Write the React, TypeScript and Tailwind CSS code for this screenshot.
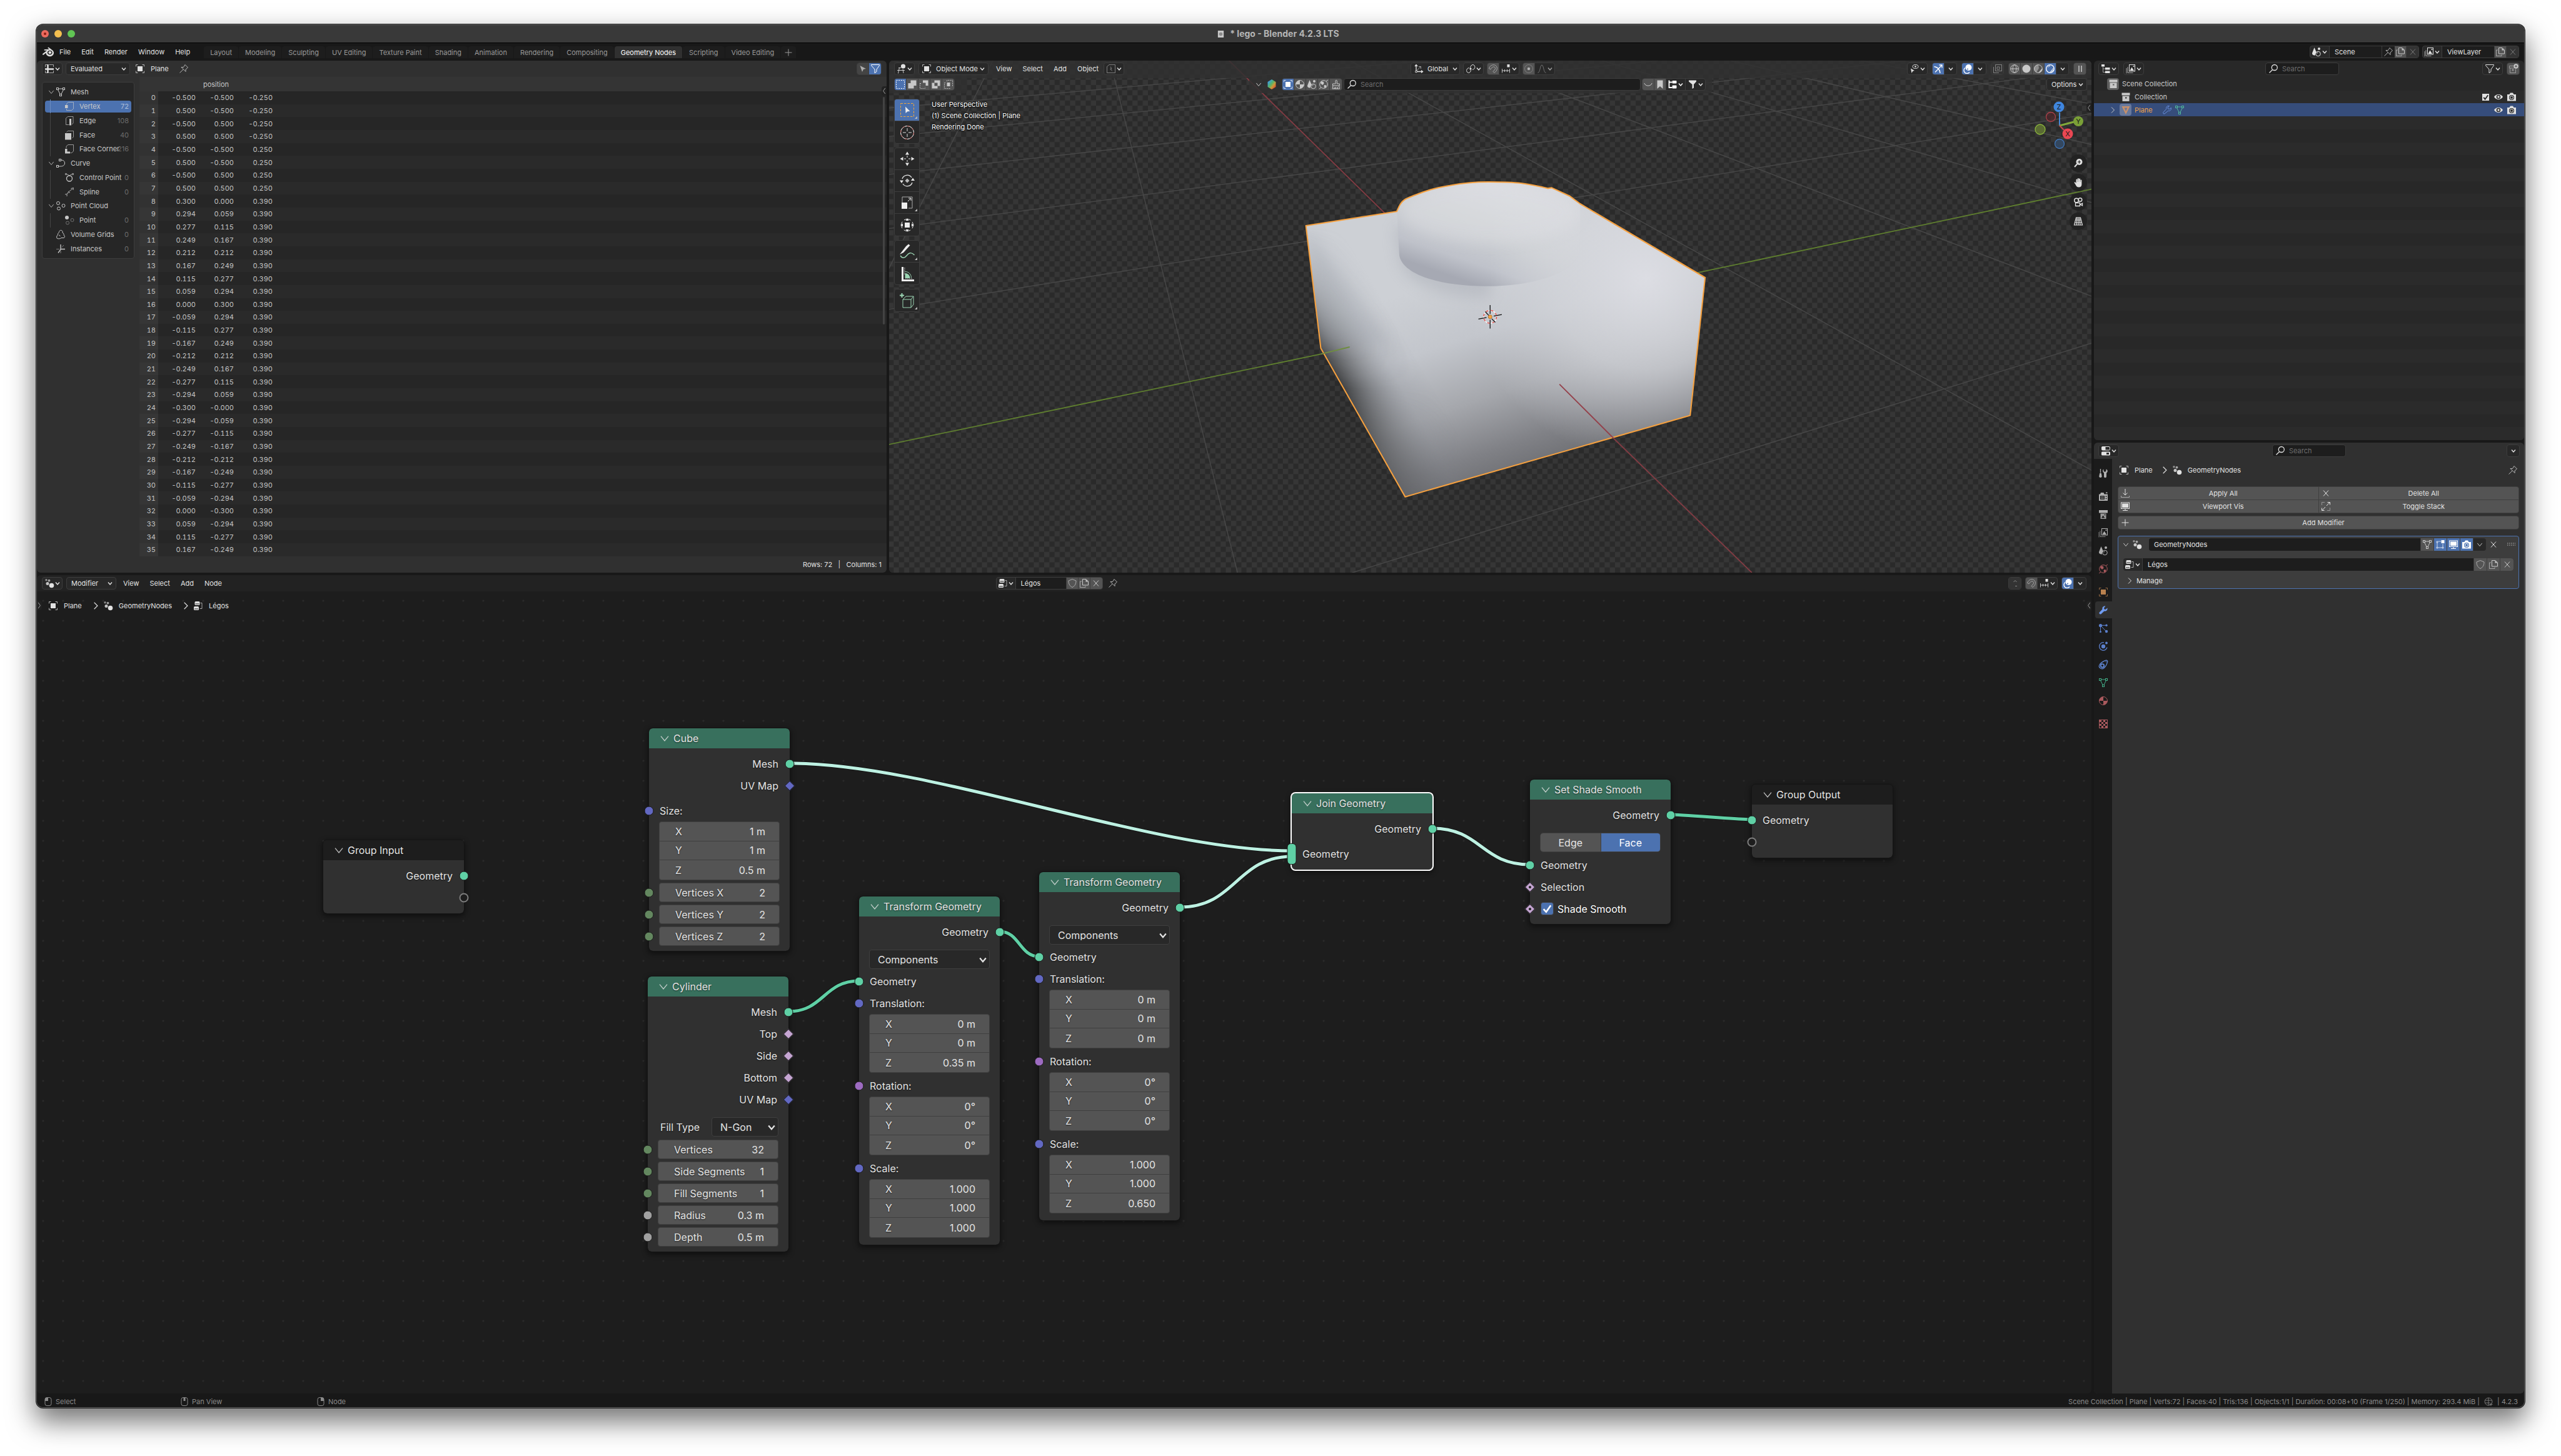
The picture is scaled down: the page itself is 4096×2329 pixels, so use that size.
import type { ReactNode } from "react";
import { SiBlender } from "react-icons/si";

/* ------------------------------------------------------------------ */
/* Icons, drawn on a 16 × 16 grid                                       */
/* ------------------------------------------------------------------ */

const solid = { fill: "currentColor", stroke: "none" } as const;

const ICONS: Record<string, ReactNode> = {
  object: (
    <>
      <path d="M4.5 1.5h-3v3M11.5 1.5h3v3M4.5 14.5h-3v-3M11.5 14.5h3v-3" opacity=".75" />
      <rect x="4" y="4" width="8" height="8" {...solid} />
    </>
  ),
  sheet: (
    <>
      <path d="M1.5 5V1.5H5M7.5 1.5H14.5V5M14.5 11V14.5H7.5M1.5 11V14.5H5" opacity=".7" />
      <path d="M5.5 1v14M1 8.500h14" strokeWidth="2.400" />
    </>
  ),
  pin: <path d="M10 1.500l4.500 4.500-3.500 3v3.500L4 5.500h3.500zM7.200 9L1.500 14.500" opacity=".75" strokeLinejoin="round" />,
  mesh: (
    <>
      <rect x="1.500" y="1.500" width="3" height="3" />
      <rect x="11.500" y="1.500" width="3" height="3" />
      <rect x="6.500" y="11.500" width="3" height="3" />
      <path d="M4.500 3h7M3.500 4.500l3.600 7M12.500 4.500l-3.600 7" />
    </>
  ),
  meshSolid: <path d="M1.500 2h13L8 15zM5.500 4.500L8 10l2.500-5.500z" {...solid} fillRule="evenodd" />,
  vertex: (
    <>
      <path d="M3.500 5.500V4l3-2.500h8V12l-3 2.500h-8V12" opacity=".7" />
      <rect x="1" y="6" width="4.500" height="5" {...solid} />
    </>
  ),
  edge: (
    <>
      <path d="M7.500 14.500h-5V4l3-2.500h8.500V12l-2 2" opacity=".7" />
      <rect x="8" y="5" width="3" height="10.500" {...solid} />
    </>
  ),
  face: (
    <>
      <path d="M3.500 3.500l2-2h9V11l-2 2" opacity=".7" />
      <rect x="1" y="5" width="10" height="10.500" {...solid} />
    </>
  ),
  corner: (
    <>
      <path d="M3 7V4l3-2.500h8.500V12l-3 2.500h-2" opacity=".7" />
      <path d="M1 8h3.500v4.500H9v3H1z" {...solid} />
    </>
  ),
  curve: (
    <>
      <rect x="5.500" y="1.500" width="3" height="3" />
      <rect x="1.500" y="11.500" width="3" height="3" />
      <path d="M8.500 3c4 0 6 2 6 5s-2.500 5-6 5h-4" />
    </>
  ),
  controlPoint: (
    <>
      <circle cx="8" cy="9.500" r="4.500" strokeWidth="1.300" />
      <path d="M1.500 1.500h2v2h-2zM12.500 1.500h2v2h-2zM4 3l2 .5L8 5l2-1.500 2-.5" opacity=".75" />
    </>
  ),
  spline: <path d="M1 12l4-1 1.500-3.500 2-1L13 3M10.500 2.500l4-1-.5 3.500M4 15v-3M6.500 8.500L9 9" opacity=".85" />,
  pointCloud: (
    <>
      <circle cx="4" cy="4" r="2.500" />
      <circle cx="12.500" cy="8" r="2.500" />
      <circle cx="5" cy="12.500" r="2.500" />
    </>
  ),
  point: (
    <>
      <circle cx="4" cy="4" r="3" {...solid} />
      <circle cx="12.500" cy="8" r="2.500" opacity=".45" />
      <circle cx="5" cy="12.500" r="2.500" opacity=".45" />
    </>
  ),
  volume: <path d="M2 14c-1-2 0-4.500 1.500-5C3 7 4 6 5 5.500 5.500 2.500 7 1.200 8.500 1.300c2 0 3 2 2.500 4 2 1 2.500 2.500 2 4 1.800.7 2 3 .5 4.200H9C8 15 3.500 15.500 2 14zM5 9c1.500 0 2 1 2 2" />,
  instances: (
    <>
      <path d="M8 1v8M8 9l-4 5.500M8 8.500h7" strokeWidth="1.300" />
      <path d="M1 8.500h5M8 11v4M10 5.500l3-3.500" opacity=".55" />
    </>
  ),
  cursor: <path d="M3.500 3l9.500 5-4 .8L7 13z" {...solid} opacity=".8" />,
  filter: <path d="M1.500 1.500h13v1.200L10 9v3.500L7 14.800V9L1.500 2.700z" />,
  filterSolid: <path d="M2 1.500h12v2L10 8v5.500L7.500 15V8L2 3.500z" {...solid} />,
  view3d: (
    <>
      <circle cx="10.500" cy="4" r="3.600" {...solid} />
      <path d="M1 10.500h12M3 6.500h4M4.500 6L2.500 15.500M10 8.500l1 6.500M.5 14" opacity=".85" />
    </>
  ),
  selectSet: <path d="M1.500 1.500h13v13h-13z" strokeDasharray="2 1.700" />,
  selectExtend: <path d="M5.500 1.500h9v8.500h-4v4.500h-9V6h4z" {...solid} />,
  selectSubtract: (
    <>
      <path d="M6 1.500h8.500V10h-4V5.500H6z" {...solid} />
      <path d="M1.500 6.500h3M1.500 6.500v8h8v-2.500" strokeDasharray="1.500 1.500" />
    </>
  ),
  selectDiff: <path d="M5.500 1.500h9v9h-4v4h-9v-9h4zM5.500 5.500v5h5v-5z" {...solid} fillRule="evenodd" />,
  selectAnd: (
    <>
      <rect x="5.500" y="5" width="5" height="6" {...solid} />
      <path d="M5.500 3V1.500h9v9H13M3 5.500H1.500v9h9V13" strokeDasharray="1.600 1.400" />
    </>
  ),
  script: (
    <>
      <path d="M5 1.500h9.500v13h-13V4.500z" opacity=".45" />
      <path d="M7 3.500L9.500 8 8 8.200l2.500 4L6 8.500l1.500-.3z" {...solid} opacity=".45" />
    </>
  ),
  axes: (
    <>
      <path d="M4 11V1.500M2 4l2-2.500L6 4M5.500 12.500h9M12 10.500l2.500 2L12 14.500" strokeWidth="1.300" />
      <circle cx="4" cy="12.500" r="1.500" />
      <path d="M5 11l6-6.500M8 4.500h3.500V8" opacity=".6" />
    </>
  ),
  pivot: (
    <>
      <path d="M7.500 6.500C8 3.500 9.500 1.500 12 1.500c4 1 4 7-1 8M8.500 9.500c0 3-1.500 5-4 5-4-1-4-7 1-8" />
      <circle cx="8" cy="8" r="1.600" {...solid} />
    </>
  ),
  magnet: <path d="M1.500 7.500C3 3 7 1 10.500 2c4 1.500 5 6 2.500 9.500L10 14.500l-2-2 3-3.500c1-1.500.5-3.500-1-4-2-.5-4 .5-6 4z" opacity=".7" />,
  snap: (
    <>
      <rect x="9.500" y="1" width="4" height="4.500" {...solid} />
      <path d="M1.500 8v6.500M5.500 9v4M9.500 9v4M13.500 8v6.500M1.500 11h12" opacity=".8" />
    </>
  ),
  prop: (
    <>
      <circle cx="8" cy="8" r="6.500" opacity=".35" />
      <circle cx="8" cy="8" r="2.200" {...solid} opacity=".8" />
    </>
  ),
  falloff: <path d="M1.500 14.500C5.500 14 5 2 8 2s2.500 12 6.500 12.500" opacity=".6" />,
  material: (
    <>
      <circle cx="8" cy="8" r="6.500" />
      <path d="M8 1.500A6.500 6.500 0 001.500 8H8zM8 8v6.500A6.500 6.500 0 0014.500 8z" {...solid} />
    </>
  ),
  scene: (
    <>
      <path d="M4.500 1l3.500 8a4 4 0 00-2 4.500C3 14 .8 12.500 1 10z" {...solid} />
      <circle cx="12" cy="3" r="2" {...solid} />
      <circle cx="10.500" cy="11" r="3.800" />
      <path d="M9 10.500a1.800 1.800 0 011.500-1.800" />
    </>
  ),
  world: (
    <>
      <circle cx="8" cy="8" r="6.300" />
      <path d="M4 3l4 1 .5 3L6 9 3 6zM9 9l3.500.5-.5 3-2.500 1.500-1-3z" {...solid} />
      <path d="M1 15l3-2M12 3l3-2" />
    </>
  ),
  brush: <path d="M7 7V2.500a1.200 1.200 0 012.400 0V7h4v3H2.500V7zM3 10l-1 5h2.500l.5-2v2h2v-2.500V15h3v-2.500V15h3.500l-1-5" />,
  search: (
    <>
      <circle cx="9.800" cy="6" r="4.500" strokeWidth="1.300" />
      <path d="M6.600 9.500L1.500 14.500" strokeWidth="1.300" />
    </>
  ),
  smile: <path d="M2 6c1 5.500 11 5.500 12 0" />,
  bookmark: <path d="M3.500 1.500h9v13.500L8 11l-4.500 4z" {...solid} />,
  tree: (
    <>
      <path d="M2.500 1.500v11.500h5M2.500 4.500h5" strokeWidth="1.800" />
      <rect x="7.500" y="2" width="7" height="4.500" rx="1" {...solid} />
      <rect x="7.500" y="9.500" width="7" height="5" rx="1" {...solid} />
    </>
  ),
  eyeCursor: (
    <>
      <ellipse cx="9.500" cy="4.500" rx="4.500" ry="3" />
      <circle cx="9.500" cy="4.500" r="1.300" {...solid} />
      <path d="M2 7.500l6 3.500-2.800.7L3.500 15z" {...solid} />
    </>
  ),
  gizmo: <path d="M1.500 4.500c6 1 9 4 9.500 10.500M3 13.500L13.500 2.500M9.500 2h4.500v4.500" strokeWidth="1.300" />,
  overlay: (
    <>
      <circle cx="9.500" cy="6" r="5" {...solid} />
      <path d="M4 6.500a5 5 0 107 7" strokeWidth="1.400" />
      <circle cx="8" cy="8.500" r="1" fill="#4c72b0" stroke="none" />
    </>
  ),
  xray: <path d="M4.500 1.500h10v10h-10zM10 14.500H1.500V5M7 5h4v4H7z" opacity=".45" />,
  wire: (
    <>
      <circle cx="8" cy="8" r="6.300" />
      <ellipse cx="8" cy="8" rx="2.800" ry="6.300" />
      <path d="M2 8h12" />
    </>
  ),
  sphere: <circle cx="8" cy="8" r="6.500" {...solid} />,
  preview: (
    <>
      <circle cx="8" cy="8" r="6.300" />
      <path d="M8 1.500A6.500 6.500 0 005 14l4-7z" {...solid} opacity=".5" />
      <path d="M13.500 8L8 14.500A6.500 6.500 0 0014.500 8z" {...solid} />
    </>
  ),
  rendered: (
    <>
      <circle cx="8" cy="8" r="6.300" strokeWidth="1.300" />
      <path d="M5 5.500C5.500 4 6.500 3.500 8 3.500M9 13.500l5-4.500M7.500 14l6.500-8" />
    </>
  ),
  pause: <path d="M6 3v10M10 3v10" strokeWidth="1.500" />,
  outliner: (
    <>
      <rect x="1" y="1" width="5" height="3.500" {...solid} />
      <rect x="7" y="6" width="7.500" height="3.500" {...solid} />
      <rect x="7" y="11.500" width="7.500" height="3.500" {...solid} />
      <path d="M3.500 5v8.500h3.500M3.500 8H7" opacity=".6" />
    </>
  ),
  images: (
    <>
      <path d="M3 5v9.500h8.500M1 7v8.500" opacity=".65" />
      <rect x="5.500" y="1.500" width="9" height="10.500" />
      <path d="M6.500 11L9.500 5.500l3.500 5.500z" {...solid} />
      <circle cx="12.500" cy="4" r="1" {...solid} />
    </>
  ),
  newCollection: (
    <>
      <path d="M8 3.500H1.500V7H9M2.500 7v7.500h9V8.500" opacity=".6" />
      <circle cx="7" cy="10" r="1.400" {...solid} opacity=".6" />
      <circle cx="12" cy="4" r="3.700" {...solid} />
      <path d="M12 2v4M10 4h4" stroke="#454545" />
    </>
  ),
  collection: (
    <>
      <rect x="1.500" y="1.500" width="13" height="4" {...solid} />
      <path d="M2.500 6.500h11v8.500h-11zM7 8.500v2h2.500v-2z" {...solid} fillRule="evenodd" />
    </>
  ),
  wrench: <path d="M14.500 4.500l-3 2.500-2-.5-.5-2 2.500-3C8 .8 5.800 3.500 6.500 6.500L1.700 11.500c-1.200 1.500.8 4 2.700 2.700L9.500 9.500c3 .8 5.700-1.500 5-5z" {...solid} />,
  wrenchLine: <path d="M14.500 4.500l-3 2-2-.5-.5-2 2.500-2.500C8 .8 6 3.500 6.700 6.500L2 11.500c-1 1.500.5 3.500 2.200 2.300L9.500 9.300c3 .7 5.500-1.300 5-4.800z" />,
  eye: (
    <>
      <path d="M1 8c3-5.500 11-5.500 14 0-3 5.500-11 5.500-14 0z" {...solid} />
      <circle cx="8" cy="8" r="3.300" fill="#2b2b2b" stroke="none" />
      <circle cx="8" cy="8" r="1.700" {...solid} />
    </>
  ),
  camera: (
    <>
      <path d="M1 4h3.500l1.500-2.500h4L11.500 4H15v10.500H1z" {...solid} />
      <circle cx="8" cy="9" r="4" fill="#2b2b2b" stroke="none" />
      <circle cx="8" cy="9" r="2.500" />
    </>
  ),
  cameraBlue: (
    <>
      <path d="M1 4h3.500l1.500-2.500h4L11.500 4H15v10.500H1z" {...solid} />
      <circle cx="8" cy="9" r="4" fill="#4c72b0" stroke="none" />
      <circle cx="8" cy="9" r="2.500" />
    </>
  ),
  tools: (
    <>
      <path d="M3.500 1v6" strokeWidth="1.300" />
      <path d="M2 9c0-2 3-2 3 0l.7 4c0 2.500-4.500 2.500-4.500 0z" {...solid} />
      <path d="M8.500 1.500v3l2 1.500 2-1.500v-3c3 1 2.700 4.500.5 6V13c0 3-4 3-4 0V7.500C6.500 6 6.500 2.500 8.500 1.500z" {...solid} />
    </>
  ),
  render: (
    <>
      <path d="M1 4.500h2L4 2h4.500l1 2.500H15V15H1z" {...solid} />
      <rect x="3" y="7" width="7" height="6" fill="#1b1b1b" stroke="none" />
      <path d="M4 8.500h5M4 10h5M4 11.500h5" opacity=".6" />
      <circle cx="12.500" cy="8" r="1" fill="#1b1b1b" stroke="none" />
      <circle cx="12.500" cy="11.500" r="1" fill="#1b1b1b" stroke="none" />
      <rect x="12" y="1.500" width="2.500" height="1.500" {...solid} />
    </>
  ),
  output: (
    <>
      <path d="M1 1h14v4.500H1z" {...solid} />
      <path d="M3.500 6.500h9V15h-9z" {...solid} opacity=".85" />
      <path d="M5 13.500l2.500-4 3 4z" fill="#1b1b1b" stroke="none" />
      <circle cx="10.500" cy="8.500" r=".9" fill="#1b1b1b" stroke="none" />
    </>
  ),
  particles: (
    <>
      <circle cx="3.500" cy="3.500" r="2.600" {...solid} />
      <circle cx="13" cy="3.200" r="1.700" {...solid} />
      <circle cx="3.500" cy="13.500" r="1.500" {...solid} />
      <circle cx="13" cy="13" r="2.200" {...solid} />
      <path d="M6 3.300h6M3.500 6v6.500M5.200 5.300l6.800 7" />
    </>
  ),
  physics: (
    <>
      <path d="M9 1.800A6.300 6.300 0 1014 9.500" strokeWidth="1.300" />
      <circle cx="8" cy="8" r="3.200" {...solid} />
      <circle cx="13" cy="2.500" r="1.900" {...solid} />
    </>
  ),
  constraint: (
    <>
      <path d="M2 8.500C3 6 8 2.500 12.500 1.200c2 0 2.500 1.300 2 3C13.500 8 11 12 9 13.700 5 16.500-.5 13 2 8.500z" strokeWidth="1.300" />
      <circle cx="6.500" cy="9.800" r="2.700" strokeWidth="1.800" />
      <circle cx="12.500" cy="3.500" r=".8" {...solid} />
    </>
  ),
  texture: (
    <>
      <rect x="1.500" y="1.500" width="13" height="13" />
      <path
        d="M2 2h3v3H2zM8 2h3v3H8zM5 5h3v3H5zM11 5h3v3h-3zM2 8h3v3H2zM8 8h3v3H8zM5 11h3v3H5zM11 11h3v3h-3z"
        {...solid}
      />
    </>
  ),
  geoNodes: (
    <>
      <circle cx="3" cy="2.700" r="1.700" {...solid} opacity=".55" />
      <circle cx="7.500" cy="3.700" r="1.900" {...solid} opacity=".65" />
      <circle cx="5" cy="8.500" r="2.500" {...solid} opacity=".85" />
      <circle cx="11.500" cy="11.500" r="3.800" {...solid} />
    </>
  ),
  nodeTree: (
    <>
      <rect x="2.500" y="1" width="8" height="6" rx="1.500" {...solid} />
      <rect x="1" y="9" width="8" height="6" rx="1.500" {...solid} />
      <path d="M3.500 5h6M2 13h6" stroke="#222" />
      <path d="M11.500 3.500h2.500v9h-3.500" opacity=".7" />
    </>
  ),
  shield: <path d="M8 1.500l6 2.500c0 5-2 8.500-6 10.500C4 12.500 2 9 2 4z" opacity=".75" />,
  copy: (
    <>
      <path d="M5.500 1.500h5.500l3.500 3.500v6h-9z" />
      <path d="M10.500 1.500v4h4z" {...solid} />
      <path d="M4 5H1.500v9.500h8.500v-2" opacity=".7" />
    </>
  ),
  close: <path d="M4 3.500l8 9M12 3.500l-8 9" />,
  apply: (
    <>
      <path d="M8 1v10M4.500 7.500L8 11l3.500-3.500" />
      <path d="M1.500 12v2.500h13V12" opacity=".6" />
    </>
  ),
  monitor: (
    <>
      <rect x="1.500" y="2" width="13" height="9.500" />
      <rect x="3" y="3.500" width="10" height="6.500" {...solid} />
      <path d="M8 11.500v2.500M4 14.500h8" />
    </>
  ),
  expand: (
    <>
      <path d="M9 7l5-5.500M10.500 1.500h4v4M7 9l-5 5.500M1.500 10.500v4h4" />
      <path d="M6 1.500H1.500V6M14.500 10v4.500H10" opacity=".45" />
    </>
  ),
  plus: <path d="M8 2.500v11M2.500 8h11" />,
  editMode: (
    <>
      <path d="M2 3h2v2H2zM2 12h2v2H2zM11 12h2v2h-2zM4.500 3H9M3 5v6.500M4.500 13H11M12 7v4.500" opacity=".7" />
      <rect x="9.500" y="1" width="5" height="5" {...solid} />
    </>
  ),
  propsEditor: (
    <>
      <rect x="1.500" y="1.500" width="13" height="5.500" rx="1.500" />
      <rect x="1" y="9.500" width="14" height="6" rx="1.500" {...solid} />
      <rect x="1.500" y="1.500" width="6" height="5.500" {...solid} />
      <rect x="9" y="11" width="4" height="3" fill="#282828" stroke="none" />
    </>
  ),
  up: <path d="M5.500 6L8 3.500 10.500 6M8 12.500h3" opacity=".5" />,
  zoom: (
    <>
      <circle cx="9.500" cy="6" r="5" {...solid} />
      <path d="M6 9.500L2 14" strokeWidth="2" />
      <path d="M9.500 3.500v5M7 6h5" stroke="#222" strokeWidth="1.200" />
    </>
  ),
  hand: <path d="M4.500 9V3.500a1 1 0 012 0V7h.3V2a1 1 0 012 0v5h.3V2.500a1 1 0 012 0V7h.3V4.500a1 1 0 012 0V11c0 3-2 4.500-4.500 4.500-3 0-4-1.500-5.500-4.500L1.700 8.500c-.6-1 .8-1.800 1.500-1z" {...solid} />,
  movie: (
    <>
      <circle cx="5" cy="5.500" r="3.300" strokeWidth="1.500" />
      <circle cx="11" cy="4.500" r="2.800" strokeWidth="1.500" />
      <path d="M3.500 9.500h7v5h-7zM11 12l3.500-2v4z" strokeWidth="1.300" />
    </>
  ),
  perspGrid: <path d="M4.500 2h7l3 12h-13zM3.500 6h9M2.500 10h11M8 2v12M6 2L5 14M10 2l1 12" strokeWidth="1.200" />,
  mouse: (
    <>
      <rect x="3" y="1.500" width="10" height="13" rx="3" />
      <path d="M3 7V4a2.500 2.500 0 012.500-2.500H8V7z" {...solid} />
    </>
  ),
  mouseMiddle: (
    <>
      <rect x="3" y="1.500" width="10" height="13" rx="3" />
      <rect x="6.500" y="2" width="3" height="5" {...solid} />
    </>
  ),
  mouseRight: (
    <>
      <rect x="3" y="1.500" width="10" height="13" rx="3" />
      <path d="M13 7V4a2.500 2.500 0 00-2.500-2.500H8V7z" {...solid} />
    </>
  ),
  extension: <path d="M8 2a6 6 0 100 12A6 6 0 008 2zM8 2v12M2.500 6h11M2.500 10h8M12 10v5M9.500 12.500h5" opacity=".8" />,
  grip: (
    <path
      d="M2 6h1.500M5 6h1.500M8 6h1.500M11 6h1.500M14 6h1M2 9h1.500M5 9h1.500M8 9h1.500M11 9h1.500M14 9h1"
      strokeWidth="1.500"
      opacity=".5"
    />
  ),
};

function Icon({ name, className = "size-4" }: { name: string; className?: string }) {
  return (
    <svg viewBox="0 0 16 16" fill="none" stroke="currentColor" className={`shrink-0 ${className}`} aria-hidden="true">
      {ICONS[name]}
    </svg>
  );
}

function Chev({ className = "size-[10px]" }: { className?: string }) {
  return (
    <svg viewBox="0 0 10 10" fill="none" stroke="currentColor" strokeWidth="1.400" className={`shrink-0 ${className}`} aria-hidden="true">
      <path d="M2 3.500l3 3.500 3-3.500" />
    </svg>
  );
}

function Expander({ open = false, className = "size-3" }: { open?: boolean; className?: string }) {
  return (
    <svg viewBox="0 0 12 12" fill="none" stroke="currentColor" className={`shrink-0 ${className}`} aria-hidden="true">
      <path d={open ? "M1.500 3.500L6 9l4.500-5.500" : "M4 1.500L8.500 6 4 10.500"} />
    </svg>
  );
}

/* ------------------------------------------------------------------ */
/* Widgets                                                              */
/* ------------------------------------------------------------------ */

function Group({ children, className = "" }: { children: ReactNode; className?: string }) {
  return (
    <div className={`flex h-5 shrink-0 divide-x divide-[#3d3d3d] overflow-hidden rounded border border-[#3d3d3d] bg-[#282828] ${className}`}>
      {children}
    </div>
  );
}

function Cell({ icon, label, tone = "" }: { icon: string; label: string; tone?: string }) {
  return (
    <button type="button" aria-label={label} className={`grid w-[19px] place-items-center ${tone}`}>
      <Icon name={icon} />
    </button>
  );
}

const GREY = "bg-[#545454] text-[#c8c8c8]";
const BLUE = "bg-[#4c72b0] text-white";

function DropCell({ icon, label, tone = "" }: { icon: string; label: string; tone?: string }) {
  return (
    <button type="button" aria-label={label} className={`flex w-[31px] items-center justify-center ${tone}`}>
      <Icon name={icon} />
      <Chev />
    </button>
  );
}

function ChevCell({ label }: { label: string }) {
  return (
    <button type="button" aria-label={label} className="grid w-[19px] place-items-center">
      <Chev />
    </button>
  );
}

function Menu({ items, className = "" }: { items: string[]; className?: string }) {
  return (
    <nav className={`flex items-center gap-[17px] ${className}`}>
      {items.map((t) => (
        <button key={t} type="button">
          {t}
        </button>
      ))}
    </nav>
  );
}

function Select({ label, value, icon, className = "" }: { label: string; value: string; icon?: string; className?: string }) {
  return (
    <label className={`relative flex h-5 shrink-0 items-center rounded border border-[#3d3d3d] bg-[#282828] ${className}`}>
      {icon && <Icon name={icon} className="ml-1 size-4" />}
      <select aria-label={label} className="h-full w-full min-w-0 appearance-none bg-transparent pl-[7px] outline-none">
        <option>{value}</option>
      </select>
      <Chev className="pointer-events-none absolute right-1 size-[10px]" />
    </label>
  );
}

function Search({ className = "" }: { className?: string }) {
  return (
    <label className={`flex h-5 shrink-0 items-center gap-[6px] rounded border border-[#3d3d3d] bg-[#1d1d1d] px-1 ${className}`}>
      <Icon name="search" />
      <input type="search" aria-label="Search" placeholder="Search" className="w-full min-w-0 bg-transparent outline-none placeholder:text-[#6e6e6e]" />
    </label>
  );
}

function TextBox({ label, value, className = "" }: { label: string; value: string; className?: string }) {
  return <input aria-label={label} defaultValue={value} className={`min-w-0 bg-[#1d1d1d] px-2 outline-none ${className}`} />;
}

function Crumb({ icon, text }: { icon: string; text: string }) {
  return (
    <span className="flex items-center gap-[9px]">
      <Icon name={icon} />
      {text}
    </span>
  );
}

/* ------------------------------------------------------------------ */
/* Title and top bars                                                   */
/* ------------------------------------------------------------------ */

const WORKSPACES = [
  "Layout", "Modeling", "Sculpting", "UV Editing", "Texture Paint", "Shading", "Animation",
  "Rendering", "Compositing", "Geometry Nodes", "Scripting", "Video Editing",
];

function TitleBar() {
  return (
    <header className="grid h-[29px] shrink-0 grid-cols-[1fr_auto_1fr] items-center border-b border-black bg-[#393939] px-[7px]">
      <div className="flex gap-[9px]">
        <button type="button" aria-label="Close" className="grid size-3 place-items-center rounded-full bg-[#ec6a5e]">
          <span className="size-1 rounded-full bg-[#8c1a10]" />
        </button>
        <button type="button" aria-label="Minimize" className="size-3 rounded-full bg-[#f4bf4f]" />
        <button type="button" aria-label="Zoom" className="size-3 rounded-full bg-[#61c554]" />
      </div>
      <h1 className="flex items-center gap-2 pr-2 text-[14px] font-bold text-[#b5b5b5]">
        <svg viewBox="0 0 14 14" className="size-[13px]" aria-hidden="true">
          <path d="M2 1h10v12H2z" fill="#c9c9c9" />
          <circle cx="7" cy="7" r="3" fill="#8b8b8b" />
        </svg>
        * lego - Blender 4.2.3 LTS
      </h1>
    </header>
  );
}

function TopBar() {
  return (
    <div className="flex h-7 shrink-0 items-center bg-[#181818] pr-2 pl-[9px]">
      <SiBlender className="size-[18px] text-[#dedede]" />
      <Menu items={["File", "Edit", "Render", "Window", "Help"]} className="ml-[9px]" />
      <nav className="ml-[22px] flex self-end pb-1">
        {WORKSPACES.map((w) => (
          <button
            key={w}
            type="button"
            className={`mr-px h-[19px] rounded-t px-[10px] ${w === "Geometry Nodes" ? "bg-[#303030] text-white" : "bg-[#1d1d1d] text-[#999]"}`}
          >
            {w}
          </button>
        ))}
        <button type="button" aria-label="Add workspace" className="grid h-[19px] w-[24px] place-items-center rounded-t bg-[#1d1d1d] text-[#999]">
          <Icon name="plus" />
        </button>
      </nav>
      <div className="ml-auto flex gap-[5px]">
        <Group>
          <DropCell icon="scene" label="Browse scene" />
          <TextBox label="Scene name" value="Scene" className="w-[84px]" />
          <button type="button" aria-label="Pin scene" className="grid w-5 place-items-center border-none bg-[#1d1d1d]">
            <Icon name="pin" />
          </button>
          <Cell icon="copy" label="New scene" tone={GREY} />
          <Cell icon="close" label="Delete scene" tone="bg-[#333] text-[#777]" />
        </Group>
        <Group>
          <DropCell icon="images" label="Browse view layer" />
          <TextBox label="View layer name" value="ViewLayer" className="w-[84px]" />
          <Cell icon="copy" label="New view layer" tone={GREY} />
          <Cell icon="close" label="Remove view layer" tone="bg-[#333] text-[#777]" />
        </Group>
      </div>
    </div>
  );
}

/* ------------------------------------------------------------------ */
/* Spreadsheet                                                          */
/* ------------------------------------------------------------------ */

type Domain = { icon: string; text: string; count?: string; open?: boolean; child?: boolean; active?: boolean };

const DOMAINS: Domain[] = [
  { icon: "mesh", text: "Mesh", open: true },
  { icon: "vertex", text: "Vertex", count: "72", child: true, active: true },
  { icon: "edge", text: "Edge", count: "108", child: true },
  { icon: "face", text: "Face", count: "40", child: true },
  { icon: "corner", text: "Face Corner", count: "216", child: true },
  { icon: "curve", text: "Curve", open: true },
  { icon: "controlPoint", text: "Control Point", count: "0", child: true },
  { icon: "spline", text: "Spline", count: "0", child: true },
  { icon: "pointCloud", text: "Point Cloud", open: true },
  { icon: "point", text: "Point", count: "0", child: true },
  { icon: "volume", text: "Volume Grids", count: "0" },
  { icon: "instances", text: "Instances", count: "0" },
];

const ROWS = [
  "-0.500 -0.500 -0.250", "0.500 -0.500 -0.250", "-0.500 0.500 -0.250", "0.500 0.500 -0.250",
  "-0.500 -0.500 0.250", "0.500 -0.500 0.250", "-0.500 0.500 0.250", "0.500 0.500 0.250",
  "0.300 0.000 0.390", "0.294 0.059 0.390", "0.277 0.115 0.390", "0.249 0.167 0.390",
  "0.212 0.212 0.390", "0.167 0.249 0.390", "0.115 0.277 0.390", "0.059 0.294 0.390",
  "0.000 0.300 0.390", "-0.059 0.294 0.390", "-0.115 0.277 0.390", "-0.167 0.249 0.390",
  "-0.212 0.212 0.390", "-0.249 0.167 0.390", "-0.277 0.115 0.390", "-0.294 0.059 0.390",
  "-0.300 -0.000 0.390", "-0.294 -0.059 0.390", "-0.277 -0.115 0.390", "-0.249 -0.167 0.390",
  "-0.212 -0.212 0.390", "-0.167 -0.249 0.390", "-0.115 -0.277 0.390", "-0.059 -0.294 0.390",
  "0.000 -0.300 0.390", "0.059 -0.294 0.390", "0.115 -0.277 0.390", "0.167 -0.249 0.390",
];

function SideTab({ className }: { className: string }) {
  return (
    <span className={`absolute grid h-[15px] w-2 place-items-center bg-[#222] text-[#aaa] ${className}`}>
      <svg viewBox="0 0 6 12" fill="none" stroke="currentColor" className="h-[11px] w-[6px]" aria-hidden="true">
        <path d="M5 1L1.500 6 5 11" />
      </svg>
    </span>
  );
}

function Spreadsheet() {
  return (
    <section className="relative flex min-w-0 flex-col overflow-hidden rounded-md bg-[#303030]">
      <div className="flex h-[26px] shrink-0 items-center px-2">
        <Group>
          <DropCell icon="sheet" label="Editor type" />
        </Group>
        <Select label="Object evaluation state" value="Evaluated" className="ml-[5px] w-[103px]" />
        <div className="ml-2 flex items-center">
          <Crumb icon="object" text="Plane" />
        </div>
        <button type="button" aria-label="Pin" className="ml-4">
          <Icon name="pin" />
        </button>
        <Group className="ml-auto">
          <Cell icon="cursor" label="Show only selected" tone="bg-[#444] text-[#c8c8c8]" />
          <Cell icon="filter" label="Use filter" tone={BLUE} />
        </Group>
      </div>
      <div className="flex min-h-0 flex-1">
        <div className="w-[164px] shrink-0 p-2">
          <ul className="flex h-[283px] w-[148px] flex-col rounded border border-[#3d3d3d] bg-[#262626] px-1 py-1 text-[#c8c8c8]">
            {DOMAINS.map((d) => (
              <li key={d.text} className="flex flex-1 items-center">
                <button
                  type="button"
                  className={`flex h-[19px] w-full items-center rounded-sm pr-1 ${d.active ? "bg-[#4c72b0]" : ""} ${d.child ? "pl-2" : "pl-1"}`}
                >
                  {d.child ? (
                    <span className={`mr-[22px] h-[23px] w-px shrink-0 ${d.active ? "bg-[#6a8bc0]" : "bg-[#444]"}`} />
                  ) : (
                    <span className="grid w-3 place-items-center">{d.open && <Expander open className="size-[10px]" />}</span>
                  )}
                  <Icon name={d.icon} className={d.child ? "size-4" : "ml-px size-4"} />
                  <span className="ml-2 w-0 flex-1 text-left whitespace-nowrap">{d.text}</span>
                  <span className={d.active ? "text-[#aebfd9]" : "text-[#6c6c6c]"}>{d.count}</span>
                </button>
              </li>
            ))}
          </ul>
        </div>
        <div className="flex min-w-0 flex-1 flex-col">
          <table className="h-[767px] w-full table-fixed border-collapse text-right text-[#c4c4c4] tabular-nums">
            <colgroup>
              <col className="w-[30px]" />
              <col className="w-[62px]" />
              <col className="w-[61px]" />
              <col className="w-[62px]" />
              <col />
            </colgroup>
            <thead>
              <tr className="h-[23px] bg-[#343434]">
                <th />
                <th colSpan={3} scope="colgroup" className="p-0 text-center font-normal">
                  position
                </th>
                <th />
              </tr>
            </thead>
            <tbody>
              {ROWS.map((r, i) => (
                <tr key={i} className={i % 2 ? "bg-[#2a2a2a]" : "bg-[#262626]"}>
                  <th scope="row" className={`p-0 pr-1 text-right font-normal ${i % 2 ? "bg-[#363636]" : "bg-[#323232]"}`}>
                    {i}
                  </th>
                  {r.split(" ").map((v, k) => (
                    <td key={k} className="p-0 pr-[2px]">
                      {v}
                    </td>
                  ))}
                  <td className="p-0" />
                </tr>
              ))}
            </tbody>
          </table>
          <p className="mt-auto flex h-[26px] items-center justify-end pr-2 whitespace-pre">Rows: 72   |   Columns: 1</p>
        </div>
      </div>
      <SideTab className="top-[41px] right-0 rounded-l-sm" />
      <span className="absolute top-[58px] right-[3px] h-[364px] w-[3px] rounded bg-[#434343]" />
    </section>
  );
}

/* ------------------------------------------------------------------ */
/* 3D viewport                                                          */
/* ------------------------------------------------------------------ */

const GRID_LINES = [
  [2744, 333, 4404, 187], [2744, 421, 5118, 187], [2744, 538, 5880, 187], [2744, 705, 6455, 214],
  [2744, 954, 6455, 350], [4174, 1766, 6455, 1058], [3066, 187, 2744, 830], [3427, 187, 3820, 1766],
  [4167, 187, 6455, 1451], [4551, 187, 6455, 914], [4944, 187, 6455, 625], [5340, 187, 6455, 446],
  [5743, 187, 6455, 321],
];

const SILHOUETTE =
  "M4031 696L4311 652L4318 637C4330 612 4345 611 4369 601C4400 588 4435 578 4474 572C4520 563 4560 561 4594 561C4640 561 4670 562 4694 565C4730 570 4750 574 4777 581L4789 579L4845 605L4876 628L5262 856L5216 1281L4337 1532L4077 1074Z";

const STUD = "M4311 640L4319 787C4340 917 4850 917 4875 772L4876 540L4311 540Z";

function ViewportScene() {
  return (
    <svg viewBox="2744 187 3711 1579" preserveAspectRatio="xMidYMid slice" className="absolute inset-0 h-full w-full" aria-label="Rendered brick">
      <defs>
        <pattern id="checker" x="2744" y="1766" width="32" height="32" patternUnits="userSpaceOnUse">
          <rect width="32" height="32" fill="#2a2a2a" />
          <path d="M0 0h16v16H0zM16 16h16v16H16z" fill="#363636" />
        </pattern>
        <linearGradient id="body" gradientUnits="userSpaceOnUse" x1="4560" y1="830" x2="4760" y2="1440">
          <stop offset="0" stopColor="#cdd0d5" />
          <stop offset=".3" stopColor="#c3c6cc" />
          <stop offset=".6" stopColor="#a5a7ac" />
          <stop offset=".85" stopColor="#808186" />
          <stop offset="1" stopColor="#6e6f73" />
        </linearGradient>
        <radialGradient id="light" gradientUnits="userSpaceOnUse" cx="5080" cy="860" r="560">
          <stop offset="0" stopColor="#dcdde3" />
          <stop offset=".5" stopColor="#d4d6db" stopOpacity=".7" />
          <stop offset="1" stopColor="#cfd1d7" stopOpacity="0" />
        </radialGradient>
        <linearGradient id="leftSide" gradientUnits="userSpaceOnUse" x1="4077" y1="1074" x2="4285" y2="955">
          <stop offset="0" stopColor="#333435" stopOpacity=".9" />
          <stop offset=".3" stopColor="#505255" stopOpacity=".55" />
          <stop offset=".65" stopColor="#7c8088" stopOpacity=".2" />
          <stop offset="1" stopColor="#8c9098" stopOpacity="0" />
        </linearGradient>
        <linearGradient id="leftFade" gradientUnits="userSpaceOnUse" x1="0" y1="700" x2="0" y2="1530">
          <stop offset="0" stopColor="#fff" stopOpacity="0" />
          <stop offset=".42" stopColor="#fff" stopOpacity=".9" />
          <stop offset=".6" stopColor="#fff" />
          <stop offset="1" stopColor="#fff" stopOpacity=".3" />
        </linearGradient>
        <mask id="leftMask">
          <rect x="3900" y="600" width="700" height="1000" fill="url(#leftFade)" />
        </mask>
        <linearGradient id="stud" gradientUnits="userSpaceOnUse" x1="4690" y1="600" x2="4590" y2="890">
          <stop offset="0" stopColor="#dbdce1" />
          <stop offset=".5" stopColor="#cccfd3" />
          <stop offset=".8" stopColor="#bfc2ca" />
          <stop offset="1" stopColor="#a6a9b3" />
        </linearGradient>
        <linearGradient id="studRight" gradientUnits="userSpaceOnUse" x1="4600" y1="0" x2="4880" y2="0">
          <stop offset="0" stopColor="#d8dade" stopOpacity="0" />
          <stop offset="1" stopColor="#d4d6db" stopOpacity=".8" />
        </linearGradient>
        <clipPath id="bodyClip">
          <path d={SILHOUETTE} />
        </clipPath>
        <filter id="soft" x="-20%" y="-20%" width="140%" height="140%">
          <feGaussianBlur stdDeviation="22" />
        </filter>
      </defs>
      <rect x="2744" y="187" width="3711" height="1579" fill="url(#checker)" />
      <g stroke="#4a4a4a" strokeWidth="3" opacity=".85">
        {GRID_LINES.map(([x1, y1, x2, y2], i) => (
          <line key={i} x1={x1} y1={y1} x2={x2} y2={y2} />
        ))}
      </g>
      <g strokeWidth="3.500">
        <path d="M3794 187L4275 658" stroke="#833b43" />
        <path d="M6455 583L5239 841M4077 1092L2744 1371" stroke="#5f7f2f" />
      </g>
      <g clipPath="url(#bodyClip)">
        <rect x="3900" y="500" width="1500" height="1100" fill="url(#body)" />
        <rect x="3900" y="500" width="1500" height="1100" fill="url(#light)" />
        <g mask="url(#leftMask)">
          <rect x="3900" y="600" width="600" height="1000" fill="url(#leftSide)" />
        </g>
        <path d="M4031 696L4290 1060L4077 1074Z" fill="#9ca1aa" opacity=".3" filter="url(#soft)" />
        <path d="M4305 700L4318 800C4340 880 4450 920 4600 915L4600 700Z" fill="#9da1ab" opacity=".35" filter="url(#soft)" />
        <path d={STUD} fill="url(#stud)" />
        <path d={STUD} fill="url(#studRight)" />
        <ellipse cx="4600" cy="655" rx="276" ry="94" fill="#dedfe3" opacity=".45" filter="url(#soft)" />
      </g>
      <path d={SILHOUETTE} fill="none" stroke="#f5a03f" strokeWidth="4" strokeLinejoin="round" />
      <path d="M4077 1092L4166 1070" stroke="#6f8d40" strokeWidth="3.500" />
      <path d="M4813 1185L4980 1352" stroke="#94404a" strokeWidth="3.500" />
      <path d="M4980 1352L5406 1766" stroke="#833b43" strokeWidth="3.500" />
      <g transform="translate(4599 977)" fill="none" strokeWidth="2.500">
        <circle r="20" stroke="#fff" />
        <circle r="20" stroke="#e0403a" strokeDasharray="8 8" />
        <path d="M0-36v27M0 9v27M-36 7l25-5M11-2l25-5M-15-16l11 12M5 6l11 11" stroke="#111" />
        <circle r="6" fill="#f5a03f" stroke="#7a4a10" strokeWidth="1" />
      </g>
    </svg>
  );
}

const TOOL_ART: Record<string, ReactNode> = {
  "Select Box": (
    <>
      <rect x="1.500" y="1.500" width="21" height="21" stroke="#f0a63c" strokeDasharray="3.500 2" />
      <path d="M9 6.500l7.500 7.500-4 .3L9.500 17z" fill="#eee" stroke="none" />
    </>
  ),
  Cursor: (
    <>
      <circle cx="12" cy="12" r="10.500" stroke="#fff" />
      <circle cx="12" cy="12" r="10.500" stroke="#b5524d" strokeDasharray="4 4.200" />
      <path d="M12 5v5M12 14v5M5 12h5M14 12h5" stroke="#ddd" />
    </>
  ),
  Move: (
    <>
      <path d="M12 7v3M12 14v3M7 12h3M14 12h3" stroke="#e6e6e6" />
      <path d="M12 .5l3 5H9zM12 23.500l3-5H9zM.5 12l5-3v6zM23.500 12l-5-3v6z" fill="#e6e6e6" stroke="none" />
    </>
  ),
  Rotate: (
    <>
      <path d="M4 9c2-6.500 11-8 15-2M20 15c-2 6.500-11 8-15 2" stroke="#e6e6e6" strokeWidth="1.300" />
      <path d="M0 11.500h6L3 16zM24 12h-6l3-4.500z" fill="#e6e6e6" stroke="none" />
      <path d="M12 8.500l3.500 3.500-3.500 3.500L8.500 12z" fill="#bbb" stroke="none" />
    </>
  ),
  Scale: (
    <>
      <path d="M4 12V3h16v18h-6" stroke="#aaa" />
      <rect x="3" y="12" width="9" height="10" fill="#eee" stroke="none" />
      <path d="M13 10l4.500-4.500M14 5h4v4" stroke="#eee" />
    </>
  ),
  Transform: (
    <>
      <circle cx="12" cy="12" r="9.500" stroke="#e6e6e6" strokeDasharray="11 3.900" strokeDashoffset="5.500" />
      <rect x="8" y="8" width="8" height="8" fill="#eee" stroke="none" />
      <path d="M12 1l2.500 4h-5zM12 23l2.500-4h-5zM1 12l4-2.500v5zM23 12l-4-2.500v5z" fill="#e6e6e6" stroke="none" />
    </>
  ),
  Annotate: (
    <>
      <path d="M0 17L10 4l4-3.500 2.500 2L6 14z" fill="#eee" stroke="none" />
      <path d="M1 19c3 4.500 7 4 10 0s7-7 12.500-1" stroke="#9cd6b4" strokeWidth="1.400" />
    </>
  ),
  Measure: (
    <>
      <path d="M4.500 1v21.500H23" stroke="#eee" strokeWidth="3" />
      <path d="M7 3h1.500M7 6h1.500M7 9h1.500M7 12h1.500M10 20v-1M13 20v-1M16 20v-1M19 20v-1" stroke="#eee" />
      <path d="M8.500 19V11a8 8 0 018 8z" fill="#9cd6b4" stroke="none" />
      <path d="M8.500 8.500c6 0 10 4.500 10 10" stroke="#9cd6b4" />
    </>
  ),
  "Add Cube": (
    <>
      <path d="M5 10l5-5h12v13l-4 5H5zM5 10h13v13M18 10l4-5" stroke="#9cd6b4" />
      <path d="M3.500 0v7M0 3.500h7" stroke="#9cd6b4" strokeWidth="2" />
    </>
  ),
};

const TOOL_GROUPS = [["Select Box", "Cursor"], ["Move", "Rotate", "Scale", "Transform"], ["Annotate", "Measure"], ["Add Cube"]];
const TOOLS_WITH_MORE = ["Select Box", "Scale", "Annotate", "Add Cube"];

function Toolbar() {
  return (
    <div className="flex w-[41px] flex-col gap-[6px]">
      {TOOL_GROUPS.map((g) => (
        <div key={g[0]} className="divide-y divide-[#3d3d3d] overflow-hidden rounded border border-[#3d3d3d] bg-[#282828]">
          {g.map((t) => (
            <button
              key={t}
              type="button"
              aria-label={t}
              className={`relative grid h-[35px] w-full place-items-center ${t === "Select Box" ? "bg-[#4c72b0]" : ""}`}
            >
              <svg viewBox="0 0 24 24" fill="none" className="size-[24px]" aria-hidden="true">
                {TOOL_ART[t]}
              </svg>
              {TOOLS_WITH_MORE.includes(t) && (
                <svg viewBox="0 0 4 4" className="absolute right-[3px] bottom-[3px] size-1" aria-hidden="true">
                  <path d="M4 0v4H0z" fill="#bbb" />
                </svg>
              )}
            </button>
          ))}
        </div>
      ))}
    </div>
  );
}

function AxisGizmo() {
  return (
    <svg viewBox="3246 161 92 84" className="h-[84px] w-[92px]" fontSize="11" textAnchor="middle" fill="none" strokeWidth="2" aria-label="View gizmo">
      <path d="M3294 202V181" stroke="#4788d8" />
      <path d="M3294 202L3317 196" stroke="#82a83a" strokeWidth="3" />
      <path d="M3294 202L3301 209" stroke="#c94450" />
      <circle cx="3280" cy="188" r="7.500" fill="#50262b" fillOpacity=".7" stroke="#a8404a" strokeWidth="1.300" />
      <circle cx="3263" cy="208" r="8" fill="#5a6b33" stroke="#8cb83c" strokeWidth="1.300" />
      <circle cx="3294" cy="231" r="7.500" fill="#33475f" stroke="#3f75b8" strokeWidth="1.300" />
      <circle cx="3293" cy="172" r="8.500" fill="#3f86de" />
      <circle cx="3324" cy="195" r="8" fill="#7aa037" />
      <circle cx="3307" cy="215" r="8.500" fill="#ea4753" />
      <g fill="#181818" stroke="none">
        <text x="3293" y="176">Z</text>
        <text x="3324" y="199">Y</text>
        <text x="3307" y="219">X</text>
      </g>
    </svg>
  );
}

function Viewport() {
  return (
    <section className="relative flex min-w-0 flex-col overflow-hidden rounded-md bg-[#2f2f2f]">
      <ViewportScene />
      <div className="relative flex h-[28px] shrink-0 items-center bg-[#303030]/85 px-2 pb-[2px]">
        <div className="flex flex-1 items-center gap-[6px]">
          <Group>
            <DropCell icon="view3d" label="Editor type" />
          </Group>
          <Select label="Mode" value="Object Mode" icon="object" className="w-[112px]" />
          <Menu items={["View", "Select", "Add", "Object"]} className="ml-[6px]" />
          <Group className="ml-[2px]">
            <DropCell icon="script" label="Asset menu" />
          </Group>
        </div>
        <div className="mr-6 flex gap-[5px]">
          <label className="relative flex h-5 w-[79px] items-center rounded border border-[#3d3d3d] bg-[#282828]">
            <Icon name="axes" className="ml-1 size-4" />
            <select aria-label="Transform orientation" className="h-full w-full min-w-0 appearance-none bg-transparent pl-[6px] outline-none">
              <option>Global</option>
            </select>
            <Chev className="pointer-events-none absolute right-[2px] size-[10px]" />
          </label>
          <Group>
            <DropCell icon="pivot" label="Pivot point" />
          </Group>
          <Group>
            <Cell icon="magnet" label="Snap" tone={GREY} />
            <DropCell icon="snap" label="Snapping" />
          </Group>
          <Group>
            <Cell icon="prop" label="Proportional editing" tone={GREY} />
            <DropCell icon="falloff" label="Falloff" tone="text-[#a0a0a0]" />
          </Group>
        </div>
        <div className="flex flex-1 items-center justify-end gap-[7px]">
          <Group>
            <DropCell icon="eyeCursor" label="Visibility" />
          </Group>
          <Group>
            <Cell icon="gizmo" label="Gizmos" tone={BLUE} />
            <ChevCell label="Gizmo options" />
          </Group>
          <Group>
            <Cell icon="overlay" label="Overlays" tone={BLUE} />
            <ChevCell label="Overlay options" />
          </Group>
          <Group>
            <Cell icon="xray" label="X-Ray" tone="bg-[#333]" />
          </Group>
          <Group>
            <Cell icon="wire" label="Wireframe" tone={GREY} />
            <Cell icon="sphere" label="Solid" tone={GREY} />
            <Cell icon="preview" label="Material preview" tone={GREY} />
            <Cell icon="rendered" label="Rendered" tone={BLUE} />
            <ChevCell label="Shading options" />
          </Group>
          <Group>
            <Cell icon="pause" label="Pause" tone={GREY} />
          </Group>
        </div>
      </div>
      <div className="relative flex">
        <div className="flex flex-1">
          <div className="rounded-br bg-[#303030]/85 pr-5 pb-1 pl-2">
            <Group>
              <Cell icon="selectSet" label="Set selection" tone={BLUE} />
              <Cell icon="selectExtend" label="Extend selection" tone={GREY} />
              <Cell icon="selectSubtract" label="Subtract selection" tone={GREY} />
              <Cell icon="selectDiff" label="Invert selection" tone={GREY} />
              <Cell icon="selectAnd" label="Intersect selection" tone={GREY} />
            </Group>
          </div>
        </div>
        <div className="mr-6 flex items-center rounded-b bg-[#303030]/85 px-[10px] pb-1">
          <Expander open className="size-[10px]" />
          <svg viewBox="0 0 14 16" className="mx-[9px] h-4 w-[14px]" aria-hidden="true">
            <defs>
              <linearGradient id="hex" x1="0" y1="0" x2="1" y2="1">
                <stop offset=".15" stopColor="#3f9be0" />
                <stop offset=".45" stopColor="#55b46a" />
                <stop offset=".65" stopColor="#c99a3a" />
                <stop offset=".9" stopColor="#e0402f" />
              </linearGradient>
            </defs>
            <path d="M7 0l6.500 4v8L7 16 .5 12V4z" fill="url(#hex)" />
          </svg>
          <Group>
            <Cell icon="object" label="Objects" tone={BLUE} />
            <Cell icon="material" label="Materials" tone={GREY} />
            <Cell icon="scene" label="Scenes" tone={GREY} />
            <Cell icon="world" label="Worlds" tone={GREY} />
            <Cell icon="brush" label="Brushes" tone={GREY} />
          </Group>
          <Search className="mx-[2px] w-[475px]" />
          <Group>
            <Cell icon="smile" label="Curve filter" tone={GREY} />
            <Cell icon="bookmark" label="Bookmarks" tone={GREY} />
            <DropCell icon="tree" label="Catalogs" tone="text-white" />
            <DropCell icon="filterSolid" label="Filter" />
          </Group>
        </div>
        <div className="flex flex-1 items-start justify-end pr-[7px]">
          <Select label="Options" value="Options" className="w-[65px]" />
        </div>
      </div>
      <div className="relative mt-[9px] flex justify-between pr-[7px] pl-2">
        <div className="flex gap-[19px]">
          <Toolbar />
          <div className="leading-[18px] text-white [text-shadow:0_0_2px_#000,0_1px_2px_#000]">
            <p>User Perspective</p>
            <p>(1) Scene Collection | Plane</p>
            <p>Rendering Done</p>
          </div>
        </div>
        <div className="flex flex-col items-end gap-[3px] pt-[2px]">
          <AxisGizmo />
          {["zoom", "hand", "movie", "perspGrid"].map((n) => (
            <button key={n} type="button" aria-label={n} className="grid size-7 place-items-center rounded-full bg-[#222]">
              <Icon name={n} className="size-4 text-[#e0e0e0]" />
            </button>
          ))}
        </div>
      </div>
      <SideTab className="top-[68px] right-0 rounded-l-sm" />
    </section>
  );
}

/* ------------------------------------------------------------------ */
/* Node editor                                                          */
/* ------------------------------------------------------------------ */

const GEO = "bg-[#5fd0a5]";
const VEC = "bg-[#6268c2]";
const ROT = "bg-[#9d6bc1]";
const INT = "bg-[#63875f]";
const FLT = "bg-[#a0a0a0]";
const BOOL = "bg-[#c5a5d2]";

type Shape = "dot" | "diamond" | "diamondDot" | "multi" | "empty";

function Socket({ side, color, shape = "dot" }: { side: "in" | "out"; color: string; shape?: Shape }) {
  const edge = side === "in" ? "left-0 -translate-x-1/2" : "right-0 translate-x-1/2";
  const look = {
    dot: "size-[15px] rounded-full border border-[#181818]",
    diamond: "size-[12px] rotate-45 border border-[#181818]",
    diamondDot: "grid size-[12px] rotate-45 place-items-center border border-[#181818]",
    multi: "h-[34px] w-[15px] rounded-[6px] border border-[#181818]",
    empty: "size-[15px] rounded-full border-2 border-[#7d7d7d]",
  }[shape];
  return (
    <span className={`absolute top-1/2 -translate-y-1/2 ${edge} ${look} ${color}`}>
      {shape === "diamondDot" && <span className="size-[4px] rounded-full bg-[#222]" />}
    </span>
  );
}

function Out({ text, color = GEO, shape }: { text?: string; color?: string; shape?: Shape }) {
  return (
    <div className="relative flex h-[35px] items-center justify-end pr-[18px]">
      {text}
      <Socket side="out" color={color} shape={shape} />
    </div>
  );
}

function In({ text, color = GEO, shape }: { text?: string; color?: string; shape?: Shape }) {
  return (
    <div className="relative flex h-[35px] items-center pl-[17px]">
      {text}
      <Socket side="in" color={color} shape={shape} />
    </div>
  );
}

function NumberField({ label, value }: { label: string; value: string }) {
  return (
    <label className="flex h-full w-full items-center pr-[22px] pl-[25px]">
      <span className="whitespace-nowrap">{label}</span>
      <input defaultValue={value} className="w-0 min-w-0 flex-1 bg-transparent text-right outline-none" />
    </label>
  );
}

function Field({ label, value, color }: { label: string; value: string; color: string }) {
  return (
    <div className="relative mt-1 px-4">
      <div className="h-[31px] rounded border border-[#3f3f3f] bg-[#545454]">
        <NumberField label={label} value={value} />
      </div>
      <Socket side="in" color={color} />
    </div>
  );
}

function Vector({ values }: { values: [string, string, string] }) {
  return (
    <div className="mx-4 grid h-[94px] grid-rows-3 divide-y divide-[#3f3f3f] overflow-hidden rounded border border-[#3f3f3f] bg-[#545454]">
      {values.map((v, i) => (
        <NumberField key={i} label={"XYZ"[i]} value={v} />
      ))}
    </div>
  );
}

function NodeSelect({ label, value, className = "" }: { label: string; value: string; className?: string }) {
  return (
    <label className={`relative flex h-[31px] items-center rounded border border-[#3f3f3f] bg-[#282828] ${className}`}>
      <select aria-label={label} className="h-full w-full appearance-none bg-transparent pl-[13px] outline-none">
        <option>{value}</option>
      </select>
      <Chev className="pointer-events-none absolute right-[2px] size-[16px]" />
    </label>
  );
}

function Node({
  title,
  place,
  plain = false,
  selected = false,
  children,
}: {
  title: string;
  place: string;
  plain?: boolean;
  selected?: boolean;
  children: ReactNode;
}) {
  return (
    <article
      className={`absolute w-[225px] rounded-[6px] bg-[#303030] shadow-[0_3px_8px_2px_rgba(0,0,0,0.45)] outline ${
        selected ? "outline-2 outline-white" : "outline-[#141414]"
      } ${place}`}
    >
      <h2 className={`flex h-8 items-center gap-[6px] rounded-t-[6px] pl-[17px] ${plain ? "bg-[#1d1d1d]" : "bg-[#38705d]"}`}>
        <Expander open className="size-4 opacity-80" />
        {title}
      </h2>
      <div className="pt-[7px]">{children}</div>
    </article>
  );
}

function TransformNode({ place, t, s }: { place: string; t: string; s: string }) {
  return (
    <Node title="Transform Geometry" place={place}>
      <Out text="Geometry" />
      <NodeSelect label="Mode" value="Components" className="mx-4 mt-[11px] mb-[2px]" />
      <In text="Geometry" />
      <In text="Translation:" color={VEC} />
      <Vector values={["0 m", "0 m", t]} />
      <div className="h-[3px]" />
      <In text="Rotation:" color={ROT} />
      <Vector values={["0°", "0°", "0°"]} />
      <div className="h-[3px]" />
      <In text="Scale:" color={VEC} />
      <Vector values={["1.000", "1.000", s]} />
      <div className="h-[11px]" />
    </Node>
  );
}

/* Horizontal-tangent noodle; shallow links get shorter handles. */
function noodle(x1: number, y1: number, x2: number, y2: number) {
  const dx = x2 - x1;
  const slope = Math.abs((y2 - y1) / dx);
  const h = 0.5 * dx * Math.min(1, slope * 3.25);
  return `M${x1} ${y1}C${x1 + h} ${y1} ${x2 - h} ${y2} ${x2} ${y2}`;
}

const LINKS: { d: string; lit?: boolean }[] = [
  { d: noodle(1204, 275, 2008, 415), lit: true },
  { d: noodle(1828, 505, 2008, 424), lit: true },
  { d: noodle(2232, 379, 2388, 437), lit: true },
  { d: noodle(1202, 672, 1315, 623) },
  { d: noodle(1540, 544, 1603, 584) },
  { d: noodle(2613, 357, 2743, 365) },
];

function NodeEditor() {
  return (
    <section className="relative flex min-h-0 flex-1 flex-col overflow-hidden rounded-md bg-[#1d1d1d]">
      <div className="flex h-[26px] shrink-0 items-center bg-[#222] px-2">
        <div className="flex flex-1 items-center gap-[6px]">
          <Group>
            <DropCell icon="geoNodes" label="Editor type" />
          </Group>
          <Select label="Node tree sub-type" value="Modifier" className="w-[80px]" />
          <Menu items={["View", "Select", "Add", "Node"]} className="ml-[5px]" />
        </div>
        <div className="mr-6 flex items-center gap-2">
          <Group>
            <DropCell icon="nodeTree" label="Browse node tree" />
            <TextBox label="Node tree name" value="Légos" className="w-[81px]" />
            <Cell icon="shield" label="Fake user" tone={GREY} />
            <Cell icon="copy" label="New node tree" tone={GREY} />
            <Cell icon="close" label="Unlink node tree" tone={GREY} />
          </Group>
          <button type="button" aria-label="Pin">
            <Icon name="pin" />
          </button>
        </div>
        <div className="flex flex-1 items-center justify-end gap-[6px]">
          <Group>
            <Cell icon="up" label="Parent node tree" tone="bg-[#333]" />
          </Group>
          <Group>
            <Cell icon="magnet" label="Snap" tone={GREY} />
            <DropCell icon="snap" label="Snapping" />
          </Group>
          <Group>
            <Cell icon="overlay" label="Overlays" tone={BLUE} />
            <ChevCell label="Overlay options" />
          </Group>
        </div>
      </div>
      <div className="relative min-h-0 flex-1 bg-[radial-gradient(circle_at_10px_15px,#2a2a2a_1px,transparent_2px)] bg-[length:32px_32px]">
        <div className="flex h-[46px] items-center pl-[18px]">
          <Crumb icon="object" text="Plane" />
          <Expander className="mr-[5px] ml-[15px] size-[14px]" />
          <Crumb icon="geoNodes" text="GeometryNodes" />
          <Expander className="mr-[5px] ml-[15px] size-[14px]" />
          <Crumb icon="nodeTree" text="Légos" />
        </div>
        <svg className="absolute inset-0 h-full w-full" fill="none" aria-hidden="true">
          {LINKS.map((l) => (
            <g key={l.d}>
              <path d={l.d} stroke="#141414" strokeWidth="7" />
              <path d={l.d} stroke={l.lit ? "#bdf1e2" : "#5fd0a5"} strokeWidth="5" />
            </g>
          ))}
        </svg>
        <div className="text-[16px] text-[#e4e4e4] [text-shadow:0_1px_2px_rgba(0,0,0,0.6)]">
          <Node title="Group Input" place="left-[458px] top-[398px]" plain>
            <Out text="Geometry" />
            <Out color="bg-[#1d1d1d]" shape="empty" />
            <div className="h-2" />
          </Node>
          <Node title="Cube" place="left-[979px] top-[219px]">
            <Out text="Mesh" />
            <Out text="UV Map" color={VEC} shape="diamond" />
            <div className="h-[5px]" />
            <In text="Size:" color={VEC} />
            <Vector values={["1 m", "1 m", "0.5 m"]} />
            <Field label="Vertices X" value="2" color={INT} />
            <Field label="Vertices Y" value="2" color={INT} />
            <Field label="Vertices Z" value="2" color={INT} />
            <div className="h-2" />
          </Node>
          <Node title="Cylinder" place="left-[977px] top-[616px]">
            <Out text="Mesh" />
            <Out text="Top" color={BOOL} shape="diamond" />
            <Out text="Side" color={BOOL} shape="diamond" />
            <Out text="Bottom" color={BOOL} shape="diamond" />
            <Out text="UV Map" color={VEC} shape="diamond" />
            <div className="mt-[11px] mr-4 mb-[5px] ml-5 flex items-center justify-between">
              Fill Type
              <NodeSelect label="Fill Type" value="N-Gon" className="w-[107px]" />
            </div>
            <Field label="Vertices" value="32" color={INT} />
            <Field label="Side Segments" value="1" color={INT} />
            <Field label="Fill Segments" value="1" color={INT} />
            <Field label="Radius" value="0.3 m" color={FLT} />
            <Field label="Depth" value="0.5 m" color={FLT} />
            <div className="h-2" />
          </Node>
          <TransformNode place="left-[1315px] top-[488px]" t="0.35 m" s="1.000" />
          <TransformNode place="left-[1603px] top-[449px]" t="0 m" s="0.650" />
          <Node title="Join Geometry" place="left-[2007px] top-[323px]" selected>
            <Out text="Geometry" />
            <div className="h-[5px]" />
            <In text="Geometry" shape="multi" />
            <div className="h-2" />
          </Node>
          <Node title="Set Shade Smooth" place="left-[2388px] top-[301px]">
            <Out text="Geometry" />
            <div className="mx-4 mt-[11px] mb-[3px] grid h-[31px] grid-cols-2 overflow-hidden rounded-[5px] border border-[#3f3f3f]">
              <button type="button" className="bg-[#545454]">
                Edge
              </button>
              <button type="button" aria-pressed="true" className="border-l border-[#3f3f3f] bg-[#4c72b0] text-white">
                Face
              </button>
            </div>
            <In text="Geometry" />
            <In text="Selection" color={BOOL} shape="diamondDot" />
            <label className="relative flex h-[35px] items-center gap-[6px] pl-[17px] text-white">
              <span className="grid">
                <input
                  type="checkbox"
                  defaultChecked
                  className="col-start-1 row-start-1 size-[21px] appearance-none rounded border border-[#3f3f3f] bg-[#4c72b0]"
                />
                <svg viewBox="0 0 20 20" fill="none" stroke="#fff" strokeWidth="2.500" className="pointer-events-none col-start-1 row-start-1 size-[21px]" aria-hidden="true">
                  <path d="M4.500 10.500l4 4.500 7-10" />
                </svg>
              </span>
              Shade Smooth
              <Socket side="in" color={BOOL} shape="diamondDot" />
            </label>
            <div className="h-[7px]" />
          </Node>
          <Node title="Group Output" place="left-[2743px] top-[309px]" plain>
            <In text="Geometry" />
            <In color="bg-[#1d1d1d]" shape="empty" />
            <div className="h-2" />
          </Node>
        </div>
        <SideTab className="top-[15px] right-0 rounded-l-sm" />
        <SideTab className="top-[15px] left-0 rotate-180 rounded-l-sm" />
      </div>
    </section>
  );
}

/* ------------------------------------------------------------------ */
/* Outliner                                                             */
/* ------------------------------------------------------------------ */

function OutlinerIcon({ name, active = false }: { name: string; active?: boolean }) {
  return (
    <span className={`grid size-[19px] place-items-center rounded ${active ? "bg-white/25" : ""}`}>
      <Icon name={name} />
    </span>
  );
}

function Outliner() {
  return (
    <section className="flex min-h-0 flex-col overflow-hidden rounded-md bg-[#282828]">
      <div className="flex h-[27px] shrink-0 items-center px-[7px] pb-px">
        <div className="flex flex-1 gap-[7px]">
          <Group>
            <DropCell icon="outliner" label="Editor type" />
          </Group>
          <Group>
            <DropCell icon="images" label="Display mode" />
          </Group>
        </div>
        <Search className="mr-[22px] w-[118px]" />
        <div className="flex flex-1 justify-end gap-[6px]">
          <Group>
            <DropCell icon="filter" label="Filter" />
          </Group>
          <Group>
            <Cell icon="newCollection" label="New collection" tone={GREY} />
          </Group>
        </div>
      </div>
      <ul className="flex min-h-0 flex-1 flex-col text-[#c8c8c8]">
        <li className="flex flex-1 items-center gap-[5px] pl-[21px]">
          <OutlinerIcon name="collection" active />
          Scene Collection
        </li>
        <li className="flex flex-1 items-center gap-[5px] bg-[#2b2b2b] pr-3 pl-[41px]">
          <OutlinerIcon name="collection" />
          Collection
          <span className="ml-auto grid">
            <input type="checkbox" aria-label="Exclude from view layer" defaultChecked className="col-start-1 row-start-1 size-[11px] appearance-none bg-[#e0e0e0]" />
            <svg viewBox="0 0 12 12" fill="none" stroke="#222" strokeWidth="2" className="pointer-events-none col-start-1 row-start-1 size-[11px]" aria-hidden="true">
              <path d="M2.500 6.500l2.500 3 5-7" />
            </svg>
          </span>
          <button type="button" aria-label="Hide in viewport" className="ml-[2px] text-[#e0e0e0]">
            <Icon name="eye" />
          </button>
          <button type="button" aria-label="Disable in renders" className="text-[#e0e0e0]">
            <Icon name="camera" />
          </button>
        </li>
        <li className="flex flex-1 items-center gap-[5px] bg-[#364d7b] pr-3 pl-[24px]">
          <Expander className="size-3" />
          <span className="text-[#c8906a]">
            <OutlinerIcon name="meshSolid" active />
          </span>
          <span className="text-[#f0a04a]">Plane</span>
          <span className="ml-[10px] flex gap-1 text-[#6d92e0]">
            <Icon name="wrenchLine" />
            <Icon name="mesh" className="size-4 text-[#52b89a]" />
          </span>
          <button type="button" aria-label="Hide in viewport" className="ml-auto text-[#e0e0e0]">
            <Icon name="eye" />
          </button>
          <button type="button" aria-label="Disable in renders" className="text-[#e0e0e0]">
            <Icon name="camera" />
          </button>
        </li>
        {Array.from({ length: 25 }, (_, i) => (
          <li key={i} className={`flex-1 ${i % 2 ? "bg-[#282828]" : "bg-[#2b2b2b]"}`} />
        ))}
      </ul>
    </section>
  );
}

/* ------------------------------------------------------------------ */
/* Properties                                                           */
/* ------------------------------------------------------------------ */

const PROP_TABS: { icon: string; color: string }[][] = [
  [{ icon: "tools", color: "text-[#b0b0b0]" }],
  [
    { icon: "render", color: "text-[#b0b0b0]" },
    { icon: "output", color: "text-[#b0b0b0]" },
    { icon: "images", color: "text-[#b0b0b0]" },
    { icon: "scene", color: "text-[#b0b0b0]" },
    { icon: "world", color: "text-[#a9595d]" },
  ],
  [
    { icon: "object", color: "text-[#b9814f]" },
    { icon: "wrench", color: "text-[#6f9bf0]" },
    { icon: "particles", color: "text-[#5b7fcb]" },
    { icon: "physics", color: "text-[#5b7fcb]" },
    { icon: "constraint", color: "text-[#5f86d4]" },
    { icon: "mesh", color: "text-[#41ac87]" },
    { icon: "material", color: "text-[#a9595d]" },
  ],
  [{ icon: "texture", color: "text-[#a9595d]" }],
];

function WideButton({ icon, text }: { icon: string; text: string }) {
  return (
    <button type="button" className="flex h-5 items-center bg-[#545454] px-[3px]">
      <Icon name={icon} />
      <span className="flex-1">{text}</span>
    </button>
  );
}

function Properties() {
  return (
    <section className="flex min-h-0 flex-col overflow-hidden rounded-md bg-[#303030]">
      <div className="flex h-[26px] shrink-0 items-center px-[7px]">
        <div className="flex flex-1">
          <Group>
            <DropCell icon="propsEditor" label="Editor type" />
          </Group>
        </div>
        <Search className="w-[118px]" />
        <div className="flex flex-1 justify-end">
          <Group>
            <ChevCell label="Options" />
          </Group>
        </div>
      </div>
      <div className="flex min-h-0 flex-1">
        <nav className="flex w-[29px] shrink-0 flex-col gap-2 bg-[#1b1b1b] pt-2">
          {PROP_TABS.map((g, i) => (
            <div key={i} className="flex flex-col">
              {g.map((t) => (
                <button
                  key={t.icon}
                  type="button"
                  aria-label={t.icon}
                  className={`my-px ml-[2px] grid h-[27px] place-items-center rounded-l pr-px ${t.color} ${t.icon === "wrench" ? "bg-[#303030]" : ""}`}
                >
                  <Icon name={t.icon} />
                </button>
              ))}
            </div>
          ))}
        </nav>
        <div className="min-w-0 flex-1 pr-2 pl-[9px]">
          <div className="flex h-9 items-center pr-[2px] pl-[2px]">
            <Crumb icon="object" text="Plane" />
            <Expander className="mr-[5px] ml-[12px] size-[14px]" />
            <Crumb icon="geoNodes" text="GeometryNodes" />
            <button type="button" aria-label="Pin" className="ml-auto">
              <Icon name="pin" />
            </button>
          </div>
          <div className="mt-2 grid grid-cols-2 gap-px overflow-hidden rounded border border-[#3f3f3f] bg-[#3f3f3f]">
            <WideButton icon="apply" text="Apply All" />
            <WideButton icon="close" text="Delete All" />
            <WideButton icon="monitor" text="Viewport Vis" />
            <WideButton icon="expand" text="Toggle Stack" />
          </div>
          <div className="mt-1 grid overflow-hidden rounded border border-[#3f3f3f]">
            <WideButton icon="plus" text="Add Modifier" />
          </div>
          <div className="mt-[10px] rounded border border-[#4c72b0] bg-[#3d3d3d] pt-[3px] pb-1">
            <div className="flex items-center pr-1 pl-[7px]">
              <Expander open className="size-[10px]" />
              <Icon name="geoNodes" className="ml-[5px] size-4" />
              <div className="ml-[11px] flex h-5 flex-1 divide-x divide-[#3d3d3d] overflow-hidden rounded bg-[#282828]">
                <TextBox label="Modifier name" value="GeometryNodes" className="flex-1" />
                <button type="button" aria-label="On cage" className={`grid w-[21px] place-items-center ${GREY}`}>
                  <Icon name="mesh" />
                </button>
                <button type="button" aria-label="Edit mode" className={`grid w-[21px] place-items-center ${BLUE}`}>
                  <Icon name="editMode" />
                </button>
                <button type="button" aria-label="Realtime" className={`grid w-[21px] place-items-center ${BLUE}`}>
                  <Icon name="monitor" />
                </button>
                <button type="button" aria-label="Render" className={`grid w-[21px] place-items-center ${BLUE}`}>
                  <Icon name="cameraBlue" />
                </button>
                <button type="button" aria-label="Modifier options" className="grid w-5 place-items-center">
                  <Expander open className="size-[10px]" />
                </button>
              </div>
              <button type="button" aria-label="Remove modifier" className="ml-1">
                <Icon name="close" />
              </button>
              <Icon name="grip" className="ml-3 size-4" />
            </div>
            <div className="mx-2 mt-[12px] flex h-5 divide-x divide-[#3d3d3d] overflow-hidden rounded bg-[#282828]">
              <DropCell icon="nodeTree" label="Browse node tree" />
              <TextBox label="Node group name" value="Légos" className="flex-1" />
              <button type="button" aria-label="Fake user" className={`grid w-[21px] place-items-center ${GREY}`}>
                <Icon name="shield" />
              </button>
              <button type="button" aria-label="New node group" className={`grid w-[21px] place-items-center ${GREY}`}>
                <Icon name="copy" />
              </button>
              <button type="button" aria-label="Unlink" className={`grid w-[21px] place-items-center ${GREY}`}>
                <Icon name="close" />
              </button>
            </div>
            <button type="button" className="mt-2 ml-3 flex h-4 items-center gap-[5px]">
              <Expander className="size-3" />
              Manage
            </button>
          </div>
        </div>
      </div>
    </section>
  );
}

/* ------------------------------------------------------------------ */
/* Status bar                                                           */
/* ------------------------------------------------------------------ */

function StatusBar() {
  return (
    <footer className="flex h-[22px] shrink-0 items-center bg-[#181818] px-[10px] pt-[3px] text-[#8a8a8a]">
      <span className="flex w-[218px] items-center gap-1">
        <Icon name="mouse" />
        Select
      </span>
      <span className="flex w-[218px] items-center gap-1">
        <Icon name="mouseMiddle" />
        Pan View
      </span>
      <span className="flex items-center gap-1">
        <Icon name="mouseRight" />
        Node
      </span>
      <span className="ml-auto flex items-center gap-[6px] whitespace-pre">
        Scene Collection | Plane | Verts:72 | Faces:40 | Tris:136 | Objects:1/1 | Duration: 00:08+10 (Frame 1/250) | Memory: 293.4 MiB |
        <Icon name="extension" />| 4.2.3
      </span>
    </footer>
  );
}

export default function App() {
  return (
    <div className="flex h-screen bg-white px-[58px] pt-[39px] pb-[77px] font-['Inter',sans-serif] text-[11px] leading-4 text-[#e2e2e2]">
      <main className="flex min-w-0 flex-1 flex-col overflow-hidden rounded-[11px] border border-[#5e5e5e] bg-[#181818] shadow-[0_0_0_1px_#222,0_20px_44px_2px_rgba(0,0,0,0.55)]">
        <TitleBar />
        <TopBar />
        <div className="grid min-h-0 flex-1 grid-cols-[3286fr_688fr] gap-1">
          <div className="flex min-h-0 min-w-0 flex-col gap-1">
            <div className="grid h-[819px] shrink-0 grid-cols-[1359fr_1923fr] gap-1">
              <Spreadsheet />
              <Viewport />
            </div>
            <NodeEditor />
          </div>
          <div className="grid min-h-0 min-w-0 grid-rows-[607px_1fr] gap-1">
            <Outliner />
            <Properties />
          </div>
        </div>
        <StatusBar />
      </main>
    </div>
  );
}
